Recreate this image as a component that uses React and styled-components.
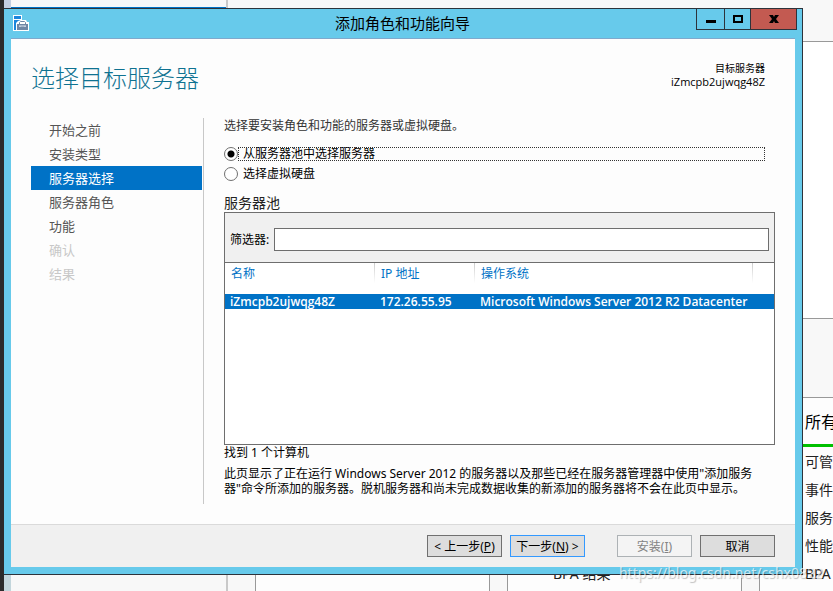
import { useState } from "react";
import styled, { createGlobalStyle } from "styled-components";

const steps = [
  { name: "开始之前" },
  { name: "安装类型" },
  { name: "服务器选择", current: true },
  { name: "服务器角色" },
  { name: "功能" },
  { name: "确认", disabled: true },
  { name: "结果", disabled: true },
];

const servers = [
  {
    name: "iZmcpb2ujwqg48Z",
    ip: "172.26.55.95",
    system: "Microsoft Windows Server 2012 R2 Datacenter",
  },
];

const tiles = [
  { id: "roles", rows: [] },
  { id: "local", rows: ["BPA 结果"] },
  {
    id: "all",
    title: "所有服务器",
    rows: ["可管理性", "事件", "服务", "性能", "BPA 结果"],
  },
];

export default function App() {
  return (
    <Desktop>
      <GlobalStyle />
      <ServerManager />
      <Wizard />
      <Watermark>https://blog.csdn.net/cshx0822</Watermark>
    </Desktop>
  );
}

function ServerManager() {
  return (
    <Manager aria-hidden="true">
      <ScreenEdge />
      <ManagerFrame />
      <ManagerNav>
        <NavSelection />
      </ManagerNav>
      <Dashboard>
        <DashboardHeader />
        <WelcomePanel />
        <GroupsHeader />
        <Tiles>
          {tiles.map((tile) => (
            <Tile key={tile.id}>
              <TileTitle>{tile.title}</TileTitle>
              <TileRows>
                {tile.rows.map((row) => (
                  <TileRow key={row}>{row}</TileRow>
                ))}
              </TileRows>
            </Tile>
          ))}
        </Tiles>
      </Dashboard>
    </Manager>
  );
}

function Wizard() {
  const [source, setSource] = useState("pool");
  const [filter, setFilter] = useState("");

  return (
    <Window role="dialog" aria-labelledby="wizard-title">
      <TitleBar>
        <WizardIcon />
        <WindowTitle id="wizard-title">添加角色和功能向导</WindowTitle>
        <WindowButtons>
          <WindowButton $width={27} aria-label="最小化">
            <svg width="10" height="8" viewBox="0 0 10 8">
              <path d="M0 5h10v3H0z" />
            </svg>
          </WindowButton>
          <WindowButton $width={26} aria-label="最大化">
            <svg width="10" height="8" viewBox="0 0 10 8">
              <path d="M0 0h10v8H0zM2 2v4h6V2z" fillRule="evenodd" />
            </svg>
          </WindowButton>
          <WindowButton $width={46} $danger aria-label="关闭">
            <svg width="10" height="8" viewBox="0 0 10 8">
              <path d="M0 0h4l1 2 1-2h4L7 4l3 4H6L5 6 4 8H0l3-4z" />
            </svg>
          </WindowButton>
        </WindowButtons>
      </TitleBar>
      <Client>
        <Header>
          <Heading>选择目标服务器</Heading>
          <Destination>
            <span>目标服务器</span>
            <ServerName>iZmcpb2ujwqg48Z</ServerName>
          </Destination>
        </Header>
        <Body>
          <StepList>
            {steps.map((step) => (
              <Step
                key={step.name}
                $current={step.current}
                disabled={step.disabled}
              >
                {step.name}
              </Step>
            ))}
          </StepList>
          <Page>
            <Intro>选择要安装角色和功能的服务器或虚拟硬盘。</Intro>
            <Choice>
              <Radio
                checked={source === "pool"}
                onChange={() => setSource("pool")}
              />
              <ChoiceText $focused>从服务器池中选择服务器</ChoiceText>
            </Choice>
            <Choice>
              <Radio
                checked={source === "disk"}
                onChange={() => setSource("disk")}
              />
              <ChoiceText>选择虚拟硬盘</ChoiceText>
            </Choice>
            <PoolTitle>服务器池</PoolTitle>
            <Pool>
              <Filter>
                <label htmlFor="filter">筛选器:</label>
                <FilterInput
                  id="filter"
                  value={filter}
                  onChange={(e) => setFilter(e.target.value)}
                />
              </Filter>
              <ServerTable>
                <colgroup>
                  <col width="150" />
                  <col width="100" />
                  <col />
                  <col width="21" />
                </colgroup>
                <thead>
                  <tr>
                    <th>名称</th>
                    <th>IP 地址</th>
                    <th>操作系统</th>
                    <td />
                  </tr>
                </thead>
                <tbody>
                  {servers.map((server) => (
                    <tr key={server.name}>
                      <td>{server.name}</td>
                      <td>{server.ip}</td>
                      <td colSpan={2}>{server.system}</td>
                    </tr>
                  ))}
                </tbody>
              </ServerTable>
            </Pool>
            <Found>找到 1 个计算机</Found>
            <Note>
              此页显示了正在运行 Windows Server 2012
              的服务器以及那些已经在服务器管理器中使用"添加服务器"命令所添加的服务器。脱机服务器和尚未完成数据收集的新添加的服务器将不会在此页中显示。
            </Note>
          </Page>
        </Body>
        <Footer>
          <Button>
            &lt; 上一步(<u>P</u>)
          </Button>
          <Button $primary>
            下一步(<u>N</u>) &gt;
          </Button>
          <Gap />
          <Button disabled>
            安装(<u>I</u>)
          </Button>
          <Button>取消</Button>
        </Footer>
      </Client>
    </Window>
  );
}

function WizardIcon() {
  return (
    <svg width="16" height="16" viewBox="0 0 16 16" aria-hidden="true">
      <path d="M0 0h9v5h4l1 2h2v9H0z" fill="#fff" />
      <path d="M1 1h7v3H1zM1 5h7L5 6 3 8v7H1z" fill="#1c86dc" />
      <path d="M4 9h11v6H4z" fill="#6f87a5" />
      <path d="M6.500 9V7.500l1-1h4l1 1V9" fill="none" stroke="#6f87a5" />
      <path d="M6 11h7M7 11v1M12 11v1" fill="none" stroke="#dfe6ee" />
    </svg>
  );
}

const GlobalStyle = createGlobalStyle`
  * {
    box-sizing: border-box;
  }

  body {
    margin: 0;
    color: #000;
    font: 12px/16px "Noto Sans", "Noto Sans CJK SC", sans-serif;
  }

  button,
  input {
    font: inherit;
  }
`;

const Desktop = styled.div`
  position: relative;
  display: flex;
  min-height: 100vh;
  overflow: hidden;
`;

const Manager = styled.div`
  display: flex;
  flex: 1;
  min-width: 0;
  overflow: hidden;
  background: #f8f8f8;
`;

const ScreenEdge = styled.div`
  flex: 0 0 4px;
  background: #2b2b2b;
`;

const ManagerFrame = styled.div`
  flex: 0 0 7px;
  background: linear-gradient(#c4cfe2, #c3d6dc);
`;

const ManagerNav = styled.div`
  flex: 0 0 217px;
  border-right: 2px solid #c9c9c9;
`;

const NavSelection = styled.div`
  height: 8px;
  border-bottom: 1px solid #0072c6;
`;

const Dashboard = styled.div`
  display: flex;
  flex: 1;
  flex-direction: column;
  min-width: 0;
`;

const DashboardHeader = styled.div`
  height: 41px;
`;

const WelcomePanel = styled.div`
  height: 278px;
  border: solid #999;
  border-width: 1px 0;
  background: #fff;
`;

const GroupsHeader = styled.div`
  height: 78px;
`;

const Tiles = styled.div`
  display: flex;
  flex: 1;
  gap: 17px;
  padding-left: 27px;
`;

const Tile = styled.div`
  display: flex;
  flex: 0 0 235px;
  flex-direction: column;
  border: 1px solid #999;
  border-bottom: 0;
  background: #fdfdfd;
  color: #222;
  font-size: 14px;
  line-height: 28px;
`;

const TileTitle = styled.div`
  height: 49px;
  padding-left: 45px;
  border-bottom: 3px solid #00c000;
  color: #000;
  font-size: 16px;
  line-height: 48px;
`;

const TileRows = styled.div`
  display: flex;
  flex: 1;
  flex-direction: column;
  justify-content: flex-end;
  padding-bottom: 3px;
`;

const TileRow = styled.div`
  padding-left: 45px;
`;

const Watermark = styled.div`
  position: absolute;
  right: 10px;
  bottom: 6px;
  color: rgba(255, 255, 255, 0.7);
  font-family: "Noto Sans", sans-serif;
  font-size: 14px;
  line-height: 24px;
  text-shadow: 1px 1px 1px rgba(0, 0, 0, 0.25);
`;

const Window = styled.section`
  position: absolute;
  inset: 8px 30px 16px 4px;
  display: flex;
  flex-direction: column;
  padding: 0 7px 7px;
  border: solid #2d333b;
  border-width: 1px 1px 1px 0;
  background: #67caeb;
`;

const TitleBar = styled.header`
  display: flex;
  flex: 0 0 29px;
  align-items: flex-start;

  > svg {
    margin: 6px 0 0 2px;
  }
`;

const WindowTitle = styled.h1`
  flex: 1;
  margin: 0 0 0 80px;
  font-size: 15px;
  font-weight: 400;
  line-height: 28px;
  text-align: center;
`;

const WindowButtons = styled.div`
  display: flex;
  margin-right: -2px;
  border: solid #2d333b;
  border-width: 0 1px 1px;
`;

const WindowButton = styled.button`
  display: grid;
  place-items: center;
  width: ${(props) => props.$width}px;
  height: 20px;
  padding: 0;
  border: 0;
  background: ${(props) => (props.$danger ? "#c35a51" : "transparent")};

  & + & {
    border-left: 1px solid #2d333b;
  }
`;

const Client = styled.div`
  display: flex;
  flex: 1;
  flex-direction: column;
  border-top: 1px solid #7fa9cc;
  background: #fdfdfd;
`;

const Header = styled.div`
  display: flex;
  justify-content: space-between;
  height: 79px;
  padding: 23px 30px 0 20px;
`;

const Heading = styled.h2`
  margin: 0;
  color: #0f7291;
  font-size: 24px;
  font-weight: 300;
  line-height: 32px;
`;

const Destination = styled.div`
  display: flex;
  flex-direction: column;
  font-size: 10px;
  line-height: 13px;
  text-align: right;
`;

const ServerName = styled.span`
  font-family: "Open Sans", sans-serif;
  font-size: 11px;
`;

const Body = styled.div`
  display: flex;
  flex: 1;
  padding: 0 20px;
`;

const StepList = styled.nav`
  flex: 0 0 173px;
  margin-bottom: 20px;
  padding-right: 1px;
  border-right: 1px solid #c8c8c8;
`;

const Step = styled.button`
  display: block;
  width: 100%;
  height: 24px;
  padding: 0 18px;
  border: 0;
  background: ${(props) => (props.$current ? "#0072c6" : "transparent")};
  color: ${(props) => (props.$current ? "#fff" : "#555")};
  font-size: 13px;
  text-align: left;

  &:disabled {
    color: #c8c8c8;
  }
`;

const Page = styled.main`
  display: flex;
  flex: 1;
  flex-direction: column;
  min-width: 0;
  padding-left: 20px;
`;

const Intro = styled.p`
  margin: 0 0 12px;
  color: #333;
`;

const Choice = styled.label`
  display: flex;
  align-items: center;
  height: 16px;
  margin: 0 10px 4px 0;
`;

const Radio = styled.input.attrs({ type: "radio", name: "source" })`
  flex: 0 0 14px;
  height: 14px;
  margin: 0;
  border: 1px solid #707070;
  border-radius: 50%;
  background: #fff;
  appearance: none;

  &:checked {
    background: radial-gradient(circle, #000 3px, #fff 4px);
  }
`;

const ChoiceText = styled.span`
  flex: 1;
  height: 14px;
  padding-left: 4px;
  line-height: 12px;
  border: 1px dotted ${(props) => (props.$focused ? "#333" : "transparent")};
`;

const PoolTitle = styled.h3`
  margin: 8px 0 0;
  color: #222;
  font-size: 14px;
  font-weight: 400;
  line-height: 18px;
`;

const Pool = styled.div`
  flex: 1;
  border: 1px solid #6e6e6e;
  background: #fff;
`;

const Filter = styled.div`
  display: flex;
  align-items: center;
  gap: 5px;
  height: 50px;
  padding: 4px 5px 0;
  border-bottom: 1px solid #6e6e6e;
  background: #f0f0f0;
`;

const FilterInput = styled.input`
  flex: 1;
  height: 23px;
  border: 1px solid #6e6e6e;
  background: #fff;
`;

const ServerTable = styled.table`
  width: 100%;
  border-collapse: collapse;
  table-layout: fixed;

  th,
  td {
    padding: 0 0 0 6px;
    font-weight: 400;
    text-align: left;
  }

  thead tr {
    height: 31px;
    color: #0072c6;
    vertical-align: top;
  }

  th {
    padding-top: 3px;
    background: linear-gradient(#ccc, #fff) right top / 1px 20px no-repeat;
  }

  tbody tr {
    background: #0072c6;
    color: #fff;
    font-family: "Open Sans", sans-serif;
    line-height: 15px;
  }

  tbody td {
    padding-left: 5px;
    font-weight: 600;
    white-space: nowrap;
  }
`;

const Found = styled.p`
  margin: 0 0 5px;
`;

const Note = styled.p`
  margin: 0 0 28px;
  line-height: 15px;
`;

const Footer = styled.footer`
  display: flex;
  justify-content: flex-end;
  gap: 8px;
  padding: 10px 20px;
  border-top: 1px solid #dadada;
  background: #f0f0f0;
`;

const Gap = styled.span`
  width: 16px;
`;

const Button = styled.button`
  width: 75px;
  height: 22px;
  padding: 2px 0 0;
  border: 1px solid ${(props) => (props.$primary ? "#3399ff" : "#707070")};
  background: #ddd;
  color: #000;
  line-height: 18px;

  &:disabled {
    border-color: #adb2b5;
    background: #f4f4f4;
    color: #838383;
  }
`;
